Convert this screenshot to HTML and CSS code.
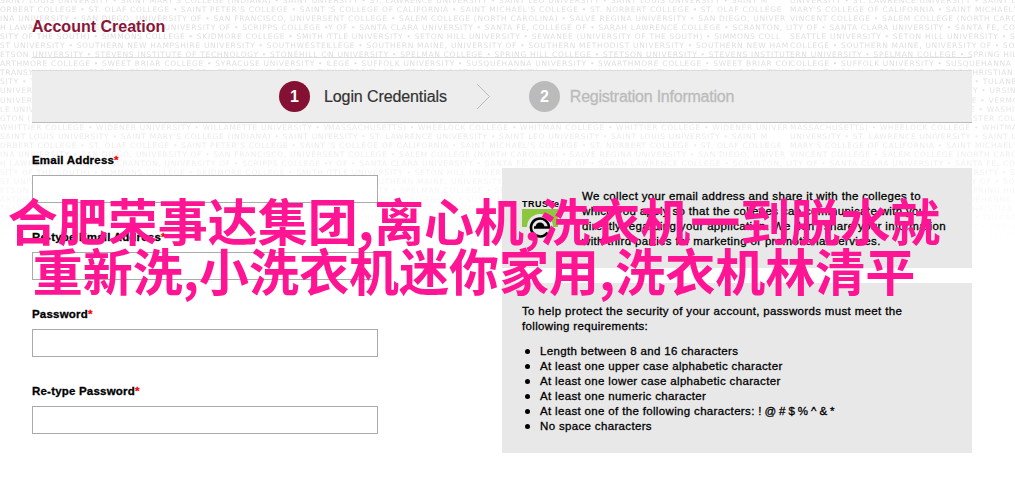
FILE: index.html
```html
<!DOCTYPE html>
<html lang="en">
<head>
    <meta charset="UTF-8">
    <meta name="viewport" content="width=device-width, initial-scale=1.0">
    <title>Account Creation</title>
    <link rel="stylesheet" href="styles.css">
</head>
<body>
    <!-- faded college names behind the page -->
    <div class="backdrop" id="backdrop" aria-hidden="true"></div>

    <div class="container">
        <h1>Account Creation</h1>

        <div class="steps">
            <div class="step active">
                <span class="number">1</span>
                <span class="step-name">Login Credentials</span>
            </div>
            <svg class="arrow" width="15" height="27" viewBox="0 0 15 27">
                <path d="M1 1L13.500 13.500L1 26" fill="none" stroke="#bbb"/>
            </svg>
            <div class="step">
                <span class="number">2</span>
                <span class="step-name">Registration Information</span>
            </div>
        </div>

        <div class="content">
            <form class="fields">
                <div class="field">
                    <label for="email">Email Address<span class="required">*</span></label>
                    <input type="text" id="email">
                </div>
                <div class="field">
                    <label for="email2">Re-type Email Address<span class="required">*</span></label>
                    <input type="text" id="email2">
                </div>
                <div class="field">
                    <label for="password">Password<span class="required">*</span></label>
                    <input type="password" id="password">
                </div>
                <div class="field">
                    <label for="password2">Re-type Password<span class="required">*</span></label>
                    <input type="password" id="password2">
                </div>
            </form>

            <div class="notes">
                <div class="note privacy">
                    <svg class="truste" width="40" height="40" viewBox="0 0 40 40">
                        <text x="0" y="9" class="truste-name" textLength="37">TRUSTe</text>
                        <path d="M0 11H36V29H0Z" fill="#8dc63f"/>
                        <circle cx="18" cy="29" r="13" fill="#e8e8e8"/>
                        <path d="M25.500 34.500A9 9 0 1 1 27 29.500H12" fill="none" stroke="#000" stroke-width="2.600"/>
                        <path d="M13.500 29A4.500 4.500 0 0 1 22.500 29Z" fill="#000"/>
                    </svg>
                    <p>We collect your email address and share it with the colleges to<br>which you apply so that the colleges can communicate with you<br>directly regarding your application. We don't share your information<br>with third parties for marketing or promotional services.</p>
                </div>
                <div class="note rules">
                    <p>To help protect the security of your account, passwords must meet the<br>following requirements:</p>
                    <ul>
                        <li>Length between 8 and 16 characters</li>
                        <li>At least one upper case alphabetic character</li>
                        <li>At least one lower case alphabetic character</li>
                        <li>At least one numeric character</li>
                        <li>At least one of the following characters: <span class="symbols">! @ # $ % ^ &amp; *</span></li>
                        <li>No space characters</li>
                    </ul>
                </div>
            </div>
        </div>
    </div>

    <div class="caption" lang="zh-CN">合肥荣事达集团,离心机,洗衣机一到脱水就<br>重新洗,小洗衣机迷你家用,洗衣机林清平</div>

    <script src="backdrop.js"></script>
</body>
</html>
```

FILE: styles.css
```css
body {
    margin: 0;
    height: 482px;
    overflow: hidden;
    background-color: #fff;
    color: #000;
    font-family: "Liberation Sans", Arial, sans-serif;
    font-size: 11.5px;
    position: relative;
}

.backdrop {
    position: absolute;
    top: -4px;
    left: 0;
    width: 1015px;
    height: 260px;
    overflow: hidden;
    z-index: -1;
    color: #dfdfdf;
    font-family: "DejaVu Sans", sans-serif;
    font-size: 7.5px;
    line-height: 9px;
    letter-spacing: 0.7px;
    -webkit-mask-image: linear-gradient(#000 30%, transparent 95%);
    mask-image: linear-gradient(#000 30%, transparent 95%);
}

.backdrop-row {
    display: grid;
    grid-template-columns: 328px 462px 225px;
    height: 9.05px;
}

.backdrop-row span {
    overflow: hidden;
    white-space: nowrap;
}

.container {
    width: 940px;
    margin-left: 32px;
}

h1 {
    margin: 0 0 12px;
    padding-top: 17px;
    height: 40px;
    border-bottom: 1px solid #ddd;
    color: #8a1538;
    font-size: 16px;
    line-height: 20px;
}

.steps {
    display: flex;
    align-items: center;
    box-sizing: border-box;
    height: 53px;
    padding-left: 247px;
    background-color: #ededed;
    border-top: 1px solid #ddd;
    border-bottom: 1px solid #bbb;
}

.step {
    display: flex;
    align-items: center;
    color: #bbb;
    font-size: 16px;
}

.number {
    width: 31px;
    height: 31px;
    border-radius: 50%;
    background-color: #bbb;
    color: #fff;
    font-weight: bold;
    line-height: 31px;
    text-align: center;
}

.step-name {
    margin-left: 10px;
    letter-spacing: -0.23px;
    white-space: nowrap;
    -webkit-text-stroke: 0.3px #bbb;
}

.active {
    color: #333;
}

.active .number {
    background-color: #841134;
}

.active .step-name {
    margin-left: 14px;
    letter-spacing: -0.1px;
    -webkit-text-stroke: 0.2px #333;
}

.arrow {
    margin: 0 38px 0 29px;
}

.content {
    display: flex;
    justify-content: space-between;
}

.fields {
    width: 346px;
    padding-top: 29px;
}

.field {
    height: 77px;
}

label {
    display: block;
    height: 23px;
    font-weight: bold;
    line-height: 16px;
    letter-spacing: 0.2px;
    -webkit-text-stroke: 0.3px;
}

.required {
    color: #f00;
}

input {
    display: block;
    box-sizing: border-box;
    width: 346px;
    height: 28px;
    border: 1px solid #aaa;
    background-color: #fff;
}

.notes {
    width: 470px;
    padding-top: 45px;
    line-height: 15px;
    letter-spacing: 0.34px;
    -webkit-text-stroke: 0.3px #000;
}

.note {
    box-sizing: border-box;
    padding: 21px 20px 20px;
    background-color: #e8e8e8;
}

.note p {
    margin: 0;
    white-space: nowrap;
}

.privacy {
    display: flex;
    gap: 20px;
    height: 100px;
    margin-bottom: 15px;
}

.truste {
    margin-top: 9px;
}

.truste-name {
    font-size: 9px;
    font-weight: bold;
    letter-spacing: 0;
}

.rules {
    height: 170px;
}

ul {
    margin: 10px 0 0;
    padding: 0;
    list-style: none;
}

li {
    display: flex;
    align-items: center;
    white-space: pre;
}

li::before {
    content: "";
    width: 5px;
    height: 5px;
    margin: 0 10px 0 3px;
    border-radius: 50%;
    background-color: #000;
}

.symbols {
    letter-spacing: 0;
    word-spacing: -0.2px;
}

.caption {
    position: absolute;
    top: 194px;
    left: 0;
    width: 948px;
    color: #ff1493;
    font-family: "Noto Sans CJK SC", sans-serif;
    font-size: 50px;
    font-weight: bold;
    line-height: 50px;
    text-align: center;
    white-space: nowrap;
}
```

FILE: backdrop.js
```javascript
// one entry per line: left, middle and right piece
const rows = [
    ["SAINT LOUIS UNIVERSITY • SAINT MARY'S COLLEGE (INDIANA) • SAINT UNIV", "ERSITY • ST. LAWRENCE UNIVERSITY • SAINT LEO UNIVERSITY • SAINT LOUIS UNIVERSITY • SAINT M", "UNIVERSITY • ST. LAWRENCE UNIVERSITY • SAINT LEO"],
    ["ORBERT COLLEGE • ST. OLAF COLLEGE • SAINT PETER'S COLLEGE • SAINT MAR", "'S COLLEGE OF CALIFORNIA • SAINT MICHAEL'S COLLEGE • ST. NORBERT COLLEGE • ST. OLAF COLLEGE", "MARY'S COLLEGE OF CALIFORNIA • SAINT MICHAEL'S"],
    ["INA UNIVERSITY • SAN DIEGO, UNIVERSITY OF • SAN FRANCISCO, UNIVERSITY", "ENT COLLEGE • SALEM COLLEGE (NORTH CAROLINA) • SALVE REGINA UNIVERSITY • SAN DIEGO, UNIVER", "VINCENT COLLEGE • SALEM COLLEGE (NORTH CAROLINA)"],
    ["H LAWRENCE COLLEGE • SCRANTON, UNIVERSITY OF • SCRIPPS COLLEGE • CITY", "Y OF • SANTA CLARA UNIVERSITY • SANTA FE, COLLEGE OF • SARAH LAWRENCE COLLEGE • SCRANTON, U", "ITY OF • SANTA CLARA UNIVERSITY • SANTA FE, COLLEGE"],
    ["SITY OF THE SOUTH) • SIMMONS COLLEGE • SKIDMORE COLLEGE • SMITH COLLEGE", "TTLE UNIVERSITY • SETON HILL UNIVERSITY • SEWANEE (UNIVERSITY OF THE SOUTH) • SIMMONS COLL", "SEATTLE UNIVERSITY • SETON HILL UNIVERSITY • SEWANEE"],
    ["ST UNIVERSITY • SOUTHERN NEW HAMPSHIRE UNIVERSITY • SOUTHWESTERN", "LLEGE • SOUTHERN MAINE, UNIVERSITY OF • SOUTHERN METHODIST UNIVERSITY • SOUTHERN NEW HAM", "COLLEGE • SOUTHERN MAINE, UNIVERSITY OF • SOUTHERN"],
    ["ETSON UNIVERSITY • STEVENS INSTITUTE OF TECHNOLOGY • STONEHILL COLL", "N UNIVERSITY • SPELMAN COLLEGE • SPRING HILL COLLEGE • STETSON UNIVERSITY • STEVENS INSTITUT", "ERN UNIVERSITY • SPELMAN COLLEGE • SPRING HILL COLLEGE"],
    ["ARTHMORE COLLEGE • SWEET BRIAR COLLEGE • SYRACUSE UNIVERSITY • COLL", "LEGE • SUFFOLK UNIVERSITY • SUSQUEHANNA UNIVERSITY • SWARTHMORE COLLEGE • SWEET BRIAR COLL", "COLLEGE • SUFFOLK UNIVERSITY • SUSQUEHANNA UNIVERSITY"],
    ["TRANSYLVANIA UNIVERSITY • TRINITY COLLEGE • TRINITY UNIVERSITY • TUFTS", "UNIVERSITY OF • TEXAS CHRISTIAN UNIVERSITY • TRANSYLVANIA UNIVERSITY • TRINITY COLLEGE • TRINITY", "LEGE • TAMPA, UNIVERSITY OF • TEXAS CHRISTIAN UNIVERSITY"],
    ["SITY • TULANE UNIVERSITY • TULSA, UNIVERSITY OF • UNION COLLEGE", "TUFTS UNIVERSITY • TULANE UNIVERSITY", "TRINITY UNIVERSITY • TUFTS UNIVERSITY • TULANE UNIVERSITY"],
    [" UNIVERSITY • URSINUS COLLEGE • UTICA COLLEGE", "UNIVERSITY OF • URSINUS COLLEGE", "VALPARAISO, UNIVERSITY OF • UNIVERSITY • URSINUS"],
    ["UNIVERSITY • VASSAR COLLEGE • VERMONT", "VALPARAISO UNIVERSITY • VASSAR COLLEGE", "COLLEGE • VANDERBILT, VASSAR COLLEGE • VERMONT"],
    ["LE UNIVERSITY • WABASH COLLEGE • WAGNER", "WAKE FOREST UNIVERSITY • WASHINGTON COLLEGE", "VIRGINIA UNIVERSITY • WAGNER COLLEGE • WASHINGTON"],
    ["GTON (RI) • WELLESLEY COLLEGE • WELLS", "WELLS COLLEGE • WESLEYAN UNIVERSITY", "WEBSTER UNIVERSITY • WELLS, WESTMINSTER COLLEGE"],
    ["WHITTIER COLLEGE • WIDENER UNIVERSITY • WILLAMETTE UNIVERSITY • WIL", "MASSACHUSETTS) • WHEELOCK COLLEGE • WHITMAN COLLEGE • WHITTIER COLLEGE • WIDENER UNIVER", "MASSACHUSETTS) • WHEELOCK COLLEGE • WHITMAN COLLEGE"]
];

const backdrop = document.getElementById("backdrop");
for (let i = 0; i < 29; i++) {
    const row = document.createElement("div");
    row.className = "backdrop-row";
    for (const piece of rows[i % rows.length]) {
        const span = document.createElement("span");
        span.textContent = piece;
        row.appendChild(span);
    }
    backdrop.appendChild(row);
}
```
